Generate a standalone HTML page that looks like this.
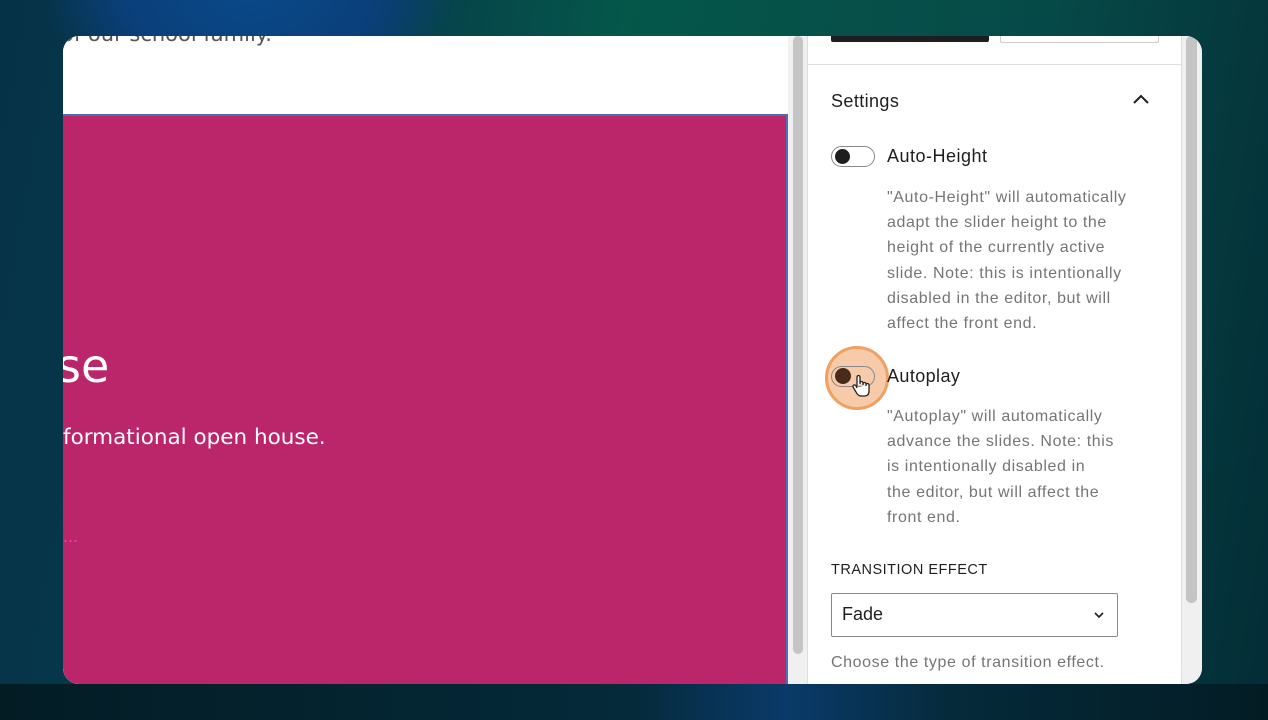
<!DOCTYPE html>
<html><head><style>
body{margin:0;width:1268px;height:720px;overflow:hidden;position:relative;font-family:"Liberation Sans",sans-serif;
background:radial-gradient(ellipse 260px 200px at 250px -20px,#0a4a8a 0%,#0a3f7a 50%,transparent 80%),linear-gradient(100deg,#063248 0%,#063a4a 25%,#05574a 45%,#064a48 75%,#042c36 100%);}
.bot{position:absolute;left:0;top:684px;width:1268px;height:36px;background:linear-gradient(90deg,#031c24 0%,#052a3a 50%,#0a3a6a 62%,#052a3a 75%,#031c24 100%)}
.win{position:absolute;left:63px;top:36px;width:1139px;height:648px;border-radius:16px;overflow:hidden;background:#fff}
.t{position:absolute;white-space:nowrap}
.d{font-size:16px;line-height:25.2px;color:#757575;letter-spacing:.6px}
</style></head><body>
<div class="bot"></div>
<div class="win">
 <div style="position:absolute;left:0;top:0;width:725px;height:648px;background:#fff"></div>
 <div class="t" style="left:-2px;top:-14px;font-family:'DejaVu Sans',sans-serif;font-size:21px;color:#555">of our school family.</div>
 <div style="position:absolute;left:0;top:78px;width:723px;height:2px;background:#4a70b0"></div>
 <div style="position:absolute;left:0;top:80px;width:723px;height:568px;background:#bb266b"></div>
 <div style="position:absolute;left:723px;top:78px;width:2px;height:570px;background:#4a70b0"></div>
 <div class="t" style="left:-6px;top:303px;font-family:'DejaVu Sans',sans-serif;font-size:46px;color:#fff">se</div>
 <div class="t" style="left:0;top:389px;font-family:'DejaVu Sans',sans-serif;font-size:21.5px;color:#fff">formational open house.</div>
 <div class="t" style="left:0;top:490px;font-size:18px;color:#f3c">...</div>
 <div style="position:absolute;left:725px;top:0;width:19px;height:648px;background:#f0f0f0"></div>
 <div style="position:absolute;left:730px;top:0;width:10px;height:618px;background:#c4c4c4;border-radius:5px"></div>
 <div style="position:absolute;left:744px;top:0;width:1px;height:648px;background:#ddd"></div>
 <div style="position:absolute;left:1118px;top:0;width:1px;height:648px;background:#ddd"></div>
 <div style="position:absolute;left:1119px;top:0;width:20px;height:648px;background:#f0f0f0"></div>
 <div style="position:absolute;left:1123px;top:0;width:11px;height:567px;background:#c4c4c4;border-radius:5px"></div>
 <div style="position:absolute;left:768px;top:-4px;width:158px;height:10px;background:#1e1e1e;border-radius:2px"></div>
 <div style="position:absolute;left:937px;top:-4px;width:157px;height:10px;border:1px solid #ccc;border-top:none;border-radius:2px"></div>
 <div style="position:absolute;left:745px;top:28px;width:373px;height:1px;background:#ddd"></div>
 <div class="t" style="left:768px;top:55px;font-size:18px;letter-spacing:.4px;color:#1e1e1e">Settings</div>
 <svg style="position:absolute;left:1069px;top:57px" width="18" height="14"><path d="M2 10 L9 3 L16 10" stroke="#1e1e1e" stroke-width="2" fill="none"/></svg>
 <div style="position:absolute;left:768px;top:110px;width:42px;height:19px;border:1px solid #888;border-radius:11px"></div>
 <div style="position:absolute;left:772px;top:113px;width:15px;height:15px;border-radius:50%;background:#1e1e1e"></div>
 <div class="t" style="left:824px;top:110px;font-size:18px;letter-spacing:.5px;color:#1e1e1e">Auto-Height</div>
 <div class="t d" style="left:824px;top:149px">"Auto-Height" will automatically<br>adapt the slider height to the<br>height of the currently active<br>slide. Note: this is intentionally<br>disabled in the editor, but will<br>affect the front end.</div>
 <div style="position:absolute;left:762px;top:310px;width:64px;height:64px;border-radius:50%;background:rgba(240,160,100,.55);border:3px solid #f0a060;box-sizing:border-box"></div>
 <div style="position:absolute;left:768px;top:330px;width:42px;height:19px;border:1px solid #888;border-radius:11px"></div>
 <div style="position:absolute;left:772px;top:332px;width:16px;height:16px;border-radius:50%;background:#4a2a1a"></div>
 <svg style="position:absolute;left:788px;top:338px" width="20" height="24" viewBox="0 0 20 24"><path d="M6 12 V3 a1.5 1.5 0 0 1 3 0 V10 M9 9 a1.5 1.5 0 0 1 3 0 V11 M12 10 a1.5 1.5 0 0 1 3 0 V12 M15 11 a1.5 1.5 0 0 1 3 0 V17 q0 5 -5 5 H10 q-3 0 -5 -4 L2 13 a1.5 1.5 0 0 1 3 -1 L6 14" fill="#fff" stroke="#222" stroke-width="1.3"/></svg>
 <div class="t" style="left:824px;top:330px;font-size:18px;letter-spacing:.4px;color:#1e1e1e">Autoplay</div>
 <div class="t d" style="left:824px;top:368px">"Autoplay" will automatically<br>advance the slides. Note: this<br>is intentionally disabled in<br>the editor, but will affect the<br>front end.</div>
 <div class="t" style="left:768px;top:526px;font-size:14.5px;color:#1e1e1e;letter-spacing:.5px">TRANSITION EFFECT</div>
 <div style="position:absolute;left:768px;top:557px;width:285px;height:42px;border:1px solid #888;border-radius:2px"></div>
 <div class="t" style="left:779px;top:568px;font-size:18px;color:#1e1e1e">Fade</div>
 <svg style="position:absolute;left:1030px;top:574px" width="12" height="10"><path d="M2 3 L6 7 L10 3" stroke="#1e1e1e" stroke-width="1.6" fill="none"/></svg>
 <div class="t d" style="left:768px;top:614px">Choose the type of transition effect.</div>
</div>
</body></html>
